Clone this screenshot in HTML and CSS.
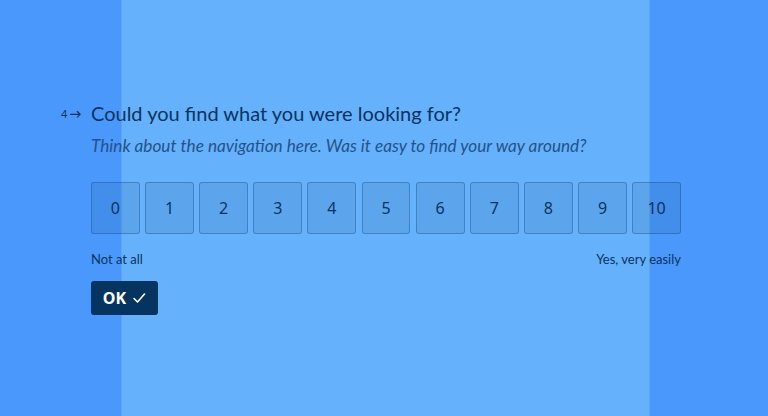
FILE: index.html
```html
<!DOCTYPE html>
<html lang="en">
<head>
    <meta charset="UTF-8">
    <meta name="viewport" content="width=device-width, initial-scale=1.0">
    <title>Survey</title>
    <link rel="stylesheet" href="styles.css">
</head>
<body>

    <div class="question">
        <div class="question-head">
            <span class="q-number">4<span class="q-arrow">&#8594;</span></span>
            <h2>Could you find what you were looking for?</h2>
        </div>
        <p class="q-hint">Think about the navigation here. Was it easy to find your way around?</p>

        <div class="scale">
            <button class="scale-item">0</button>
            <button class="scale-item">1</button>
            <button class="scale-item">2</button>
            <button class="scale-item">3</button>
            <button class="scale-item">4</button>
            <button class="scale-item">5</button>
            <button class="scale-item">6</button>
            <button class="scale-item">7</button>
            <button class="scale-item">8</button>
            <button class="scale-item">9</button>
            <button class="scale-item">10</button>
        </div>

        <div class="scale-labels">
            <span>Not at all</span>
            <span>Yes, very easily</span>
        </div>

        <button class="ok-button">OK
            <svg width="14" height="14" viewBox="0 0 14 14" fill="none" stroke="#fff" stroke-width="1.6" stroke-linecap="round" stroke-linejoin="round"><path d="M2 7.5 L5.5 11 L12.5 3"/></svg>
        </button>
    </div>

</body>
</html>
```

FILE: styles.css
```css
body {
    margin: 0;
    height: 416px;
    font-family: Lato, "Noto Sans", sans-serif;
    color: #0a3461;
    background: linear-gradient(to right,
        #4a98fb 0, #4a98fb 121px,
        #5aa6f8 121px, #5aa6f8 122px,
        #66b1fb 122px, #66b1fb 649px,
        #5aa6f8 649px, #5aa6f8 650px,
        #4a98fb 650px);
}

.question {
    padding: 100px 0 0 91px;
    width: 590px;
}

.question-head {
    position: relative;
}

.q-number {
    position: absolute;
    left: -30px;
    top: 6px;
    font-size: 11px;
    display: flex;
    align-items: center;
    gap: 2px;
}

.q-arrow {
    font-size: 12px;
    font-weight: bold;
}

h2 {
    margin: 0;
    font-size: 20px;
    font-weight: normal;
    line-height: 26px;
}

.q-hint {
    margin: 9px 0 0;
    font-size: 17.2px;
    font-style: italic;
    line-height: 22px;
    color: #23538a;
}

.scale {
    margin-top: 25px;
    display: grid;
    grid-template-columns: repeat(11, 1fr);
    column-gap: 5.3px;
}

.scale-item {
    height: 52px;
    padding: 0;
    background-color: rgba(10, 52, 97, 0.1);
    border: 1px solid rgba(10, 52, 97, 0.3);
    border-radius: 3px;
    font-family: "Noto Sans", sans-serif;
    font-size: 16px;
    color: #0a3461;
    cursor: pointer;
}

.scale-labels {
    margin-top: 16px;
    display: flex;
    justify-content: space-between;
    font-size: 13px;
    line-height: 18px;
}

.ok-button {
    margin-top: 13px;
    width: 67px;
    height: 34px;
    display: flex;
    align-items: center;
    justify-content: center;
    gap: 6px;
    background-color: #063461;
    color: #fff;
    border: none;
    border-radius: 3px;
    font-family: "Noto Sans", sans-serif;
    font-size: 16px;
    font-weight: bold;
    cursor: pointer;
}
```
